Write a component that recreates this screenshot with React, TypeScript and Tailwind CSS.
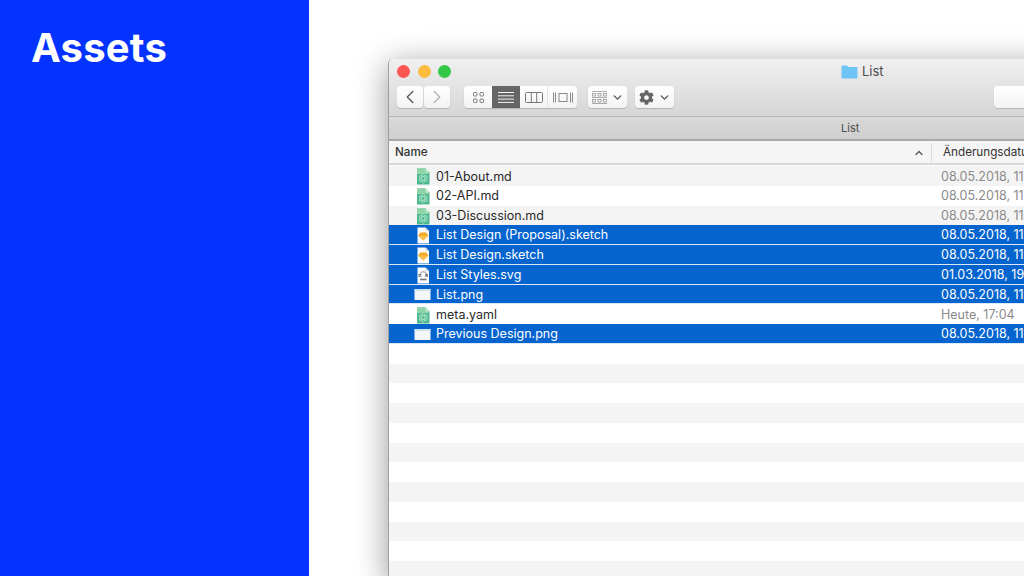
import { ChevronLeft, ChevronRight, ChevronDown, ChevronUp } from "lucide-react";
import { FaCog } from "react-icons/fa";

type Kind = "atom" | "sketch" | "svg" | "png";

const files: { name: string; date: string; kind: Kind; selected?: boolean }[] = [
  { name: "01-About.md", date: "08.05.2018, 11", kind: "atom" },
  { name: "02-API.md", date: "08.05.2018, 11", kind: "atom" },
  { name: "03-Discussion.md", date: "08.05.2018, 11", kind: "atom" },
  { name: "List Design (Proposal).sketch", date: "08.05.2018, 11", kind: "sketch", selected: true },
  { name: "List Design.sketch", date: "08.05.2018, 11", kind: "sketch", selected: true },
  { name: "List Styles.svg", date: "01.03.2018, 19", kind: "svg", selected: true },
  { name: "List.png", date: "08.05.2018, 11", kind: "png", selected: true },
  { name: "meta.yaml", date: "Heute, 17:04", kind: "atom" },
  { name: "Previous Design.png", date: "08.05.2018, 11", kind: "png", selected: true },
];

const emptyRows = Array.from({ length: 12 }, (_, i) => i);

function FileIcon({ kind }: { kind: Kind }) {
  if (kind === "png") {
    return (
      <svg width="17" height="11" viewBox="0 0 17 11" className="ml-[-2px] mr-[3px]">
        <rect x="0.5" y="0" width="16" height="11" rx="0.5" fill="#f4f7fa" />
        <rect x="0.5" y="0" width="16" height="2" fill="#cfe0f1" />
      </svg>
    );
  }
  if (kind === "atom") {
    return (
      <svg width="14" height="17" viewBox="0 0 14 17" className="mr-[4px]">
        <path d="M1 0.5H9.5L13.5 4.5V16.5H1Z" fill="#4fb78f" />
        <path d="M1 0.5H9.5L13.5 4.5V6H1Z" fill="#8fd3a8" />
        <path d="M9.5 0.5L13.5 4.5H9.5Z" fill="#c4ecd0" />
        <g fill="none" stroke="#a9e3c6" strokeWidth="0.8">
          <ellipse cx="7.2" cy="10.5" rx="4.6" ry="1.8" transform="rotate(30 7.2 10.5)" />
          <ellipse cx="7.2" cy="10.5" rx="4.6" ry="1.8" transform="rotate(-30 7.2 10.5)" />
          <ellipse cx="7.2" cy="10.5" rx="4.6" ry="1.8" transform="rotate(90 7.2 10.5)" />
        </g>
      </svg>
    );
  }
  return (
    <svg width="14" height="17" viewBox="0 0 14 17" className="mr-[4px]">
      <path d="M1.5 0.5H9.5L13 4V16.5H1.5Z" fill="#fbfbfb" />
      <path d="M9.5 0.5L13 4H9.5Z" fill="#d8d8d8" />
      {kind === "sketch" ? (
        <>
          <path d="M4.4 5.5H10.2L12.4 8.4L7.3 13.4L2.2 8.4Z" fill="#f6a623" />
          <path d="M2.2 8.4H12.4L7.3 13.4Z" fill="#fbc04c" />
        </>
      ) : (
        <g fill="none" stroke="#777" strokeWidth="0.9">
          <path d="M4 8C4 5.5 6 4.8 7.2 4.8S10.5 5.5 10.5 8" />
          <rect x="3" y="7.5" width="1.8" height="1.8" />
          <rect x="9.7" y="7.5" width="1.8" height="1.8" />
          <path d="M4 12.5H10.5" strokeWidth="1.6" />
        </g>
      )}
    </svg>
  );
}

function ToolButton({ children, className = "" }: { children?: React.ReactNode; className?: string }) {
  return (
    <div
      className={`flex h-[22px] items-center justify-center rounded-[4px] bg-gradient-to-b from-white to-[#f3f3f3] shadow-[0_1px_1px_rgba(0,0,0,0.18)] ${className}`}
    >
      {children}
    </div>
  );
}

export default function App() {
  return (
    <div className="flex h-[576px] w-[1024px] overflow-hidden bg-white font-['Inter','Liberation_Sans',sans-serif]">
      <aside className="h-full w-[309px] shrink-0 bg-[#0433ff] pl-[31px] pt-[24px]">
        <h1 className="text-[40px] leading-[48px] font-bold tracking-[0.2px] text-white">Assets</h1>
      </aside>

      <main className="min-w-0 flex-1 pl-[79px] pt-[59px]">
        <div className="flex w-[760px] flex-col rounded-t-[5px] border-l border-l-[#a0a0a0] bg-white shadow-[0_6px_32px_rgba(0,0,0,0.42)]">
          <div className="h-[58px] rounded-t-[5px] border-b border-[#b6b6b6] bg-gradient-to-b from-[#f0f0f0] to-[#d6d6d6] pl-[8px]">
            <div className="mb-[2px] flex h-[25px] items-center">
              <span className="h-[13px] w-[13px] rounded-full bg-[#fc5753]" />
              <span className="ml-[8px] h-[13px] w-[13px] rounded-full bg-[#fdbc40]" />
              <span className="ml-[7px] h-[13px] w-[13px] rounded-full bg-[#33c748]" />
              <svg width="17" height="14" viewBox="0 0 17 14" className="ml-[390px]">
                <path d="M0.5 2C0.5 1 1 0.5 2 0.5H6L7.5 2H15C16 2 16.5 2.5 16.5 3.5V12.5C16.5 13.2 16 13.5 15.3 13.5H1.7C1 13.5 0.5 13.2 0.5 12.5Z" fill="#6ec4f4" />
              </svg>
              <span className="ml-[4px] text-[13px] text-[#4c4c4c]">List</span>
            </div>
            <div className="flex items-center">
              <ToolButton className="w-[26px]">
                <ChevronLeft size={22} strokeWidth={1.5} className="text-[#5a5a5a]" />
              </ToolButton>
              <ToolButton className="ml-[1px] w-[26px]">
                <ChevronRight size={22} strokeWidth={1.5} className="text-[#b4b4b4]" />
              </ToolButton>

              <div className="ml-[14px] flex h-[22px] w-[113px] rounded-[4px] bg-gradient-to-b from-white to-[#f3f3f3] shadow-[0_1px_1px_rgba(0,0,0,0.18)]">
                <div className="flex w-[28px] items-center justify-center">
                  <svg width="11" height="11" viewBox="0 0 11 11" fill="none" stroke="#777">
                    <rect x="0.5" y="0.5" width="3.5" height="3.5" rx="0.8" />
                    <rect x="7" y="0.5" width="3.5" height="3.5" rx="0.8" />
                    <rect x="0.5" y="7" width="3.5" height="3.5" rx="0.8" />
                    <rect x="7" y="7" width="3.5" height="3.5" rx="0.8" />
                  </svg>
                </div>
                <div className="flex w-[28px] items-center justify-center bg-[#666666]">
                  <svg width="16" height="11" viewBox="0 0 16 11" stroke="#f4f4f4">
                    <path d="M0 0.5H16M0 3.8H16M0 7.1H16M0 10.4H16" />
                  </svg>
                </div>
                <div className="flex w-[28px] items-center justify-center border-r border-[#e2e2e2]">
                  <svg width="18" height="11" viewBox="0 0 18 11" fill="none" stroke="#777">
                    <rect x="0.5" y="0.5" width="17" height="10" rx="1" />
                    <path d="M6.3 0.5V10.5M11.7 0.5V10.5" />
                  </svg>
                </div>
                <div className="flex flex-1 items-center justify-center">
                  <svg width="20" height="11" viewBox="0 0 20 11" fill="none" stroke="#888">
                    <rect x="6" y="1.5" width="8" height="8" />
                    <path d="M0.5 0.5V10.5M2.5 0.5V10.5M17.5 0.5V10.5M19.5 0.5V10.5" />
                  </svg>
                </div>
              </div>

              <ToolButton className="ml-[11px] w-[39px] gap-[4px]">
                <svg width="15" height="13" viewBox="0 0 15 13" fill="none" stroke="#8a8a8a" strokeWidth="0.7">
                  <path d="M0 0.5H15M0 6.5H15M0 12.5H15" />
                  <rect x="0.5" y="2.5" width="3" height="2.5" />
                  <rect x="6" y="2.5" width="3" height="2.5" />
                  <rect x="11.5" y="2.5" width="3" height="2.5" />
                  <rect x="0.5" y="8.5" width="3" height="2.5" />
                  <rect x="6" y="8.5" width="3" height="2.5" />
                  <rect x="11.5" y="8.5" width="3" height="2.5" />
                </svg>
                <ChevronDown size={13} strokeWidth={2.5} className="text-[#555]" />
              </ToolButton>
              <ToolButton className="ml-[8px] w-[39px] gap-[4px]">
                <FaCog size={15} className="text-[#666]" />
                <ChevronDown size={13} strokeWidth={2.5} className="text-[#555]" />
              </ToolButton>

              <ToolButton className="ml-[320px] w-[100px]" />
            </div>
          </div>

          <div className="flex h-[24px] items-center border-b-2 border-[#a9a9a9] bg-gradient-to-b from-[#d9d9d9] to-[#cfcfcf] pl-[452px] text-[11px] text-[#4c4c4c]">
            List
          </div>

          <div className="flex h-[24px] items-center border-b-2 border-[#d8d8d8] bg-[#f5f5f5] pt-[2px] text-[11.7px] text-[#333]">
            <span className="ml-[6px] w-[518px] font-medium">Name</span>
            <ChevronUp size={12} strokeWidth={2.5} className="text-[#555]" />
            <span className="ml-[6px] h-[20px] w-px bg-[#dcdcdc]" />
            <span className="ml-[11px] whitespace-nowrap">Änderungsdatum</span>
          </div>

          <div className="pt-[1px]">
            {files.map((f, i) => (
              <div
                key={f.name}
                className={`flex h-[19.75px] items-center whitespace-nowrap pt-[2px] text-[12.5px] ${
                  f.selected
                    ? "border-b border-[#dbe8f6] bg-[#0664cf] text-white"
                    : i % 2 === 0
                      ? "bg-[#f4f4f4] text-[#2a2a2a]"
                      : "bg-white text-[#2a2a2a]"
                }`}
              >
                <div className="flex w-[552px] items-center pl-[27px]">
                  <FileIcon kind={f.kind} />
                  <span className="ml-[2px]">{f.name}</span>
                </div>
                <span className={f.selected ? "text-white" : "text-[#8a8a8a]"}>{f.date}</span>
              </div>
            ))}
            {emptyRows.map((n) => (
              <div key={n} className={`h-[19.75px] ${n % 2 === 0 ? "bg-white" : "bg-[#f4f4f4]"}`} />
            ))}
          </div>
        </div>
      </main>
    </div>
  );
}
